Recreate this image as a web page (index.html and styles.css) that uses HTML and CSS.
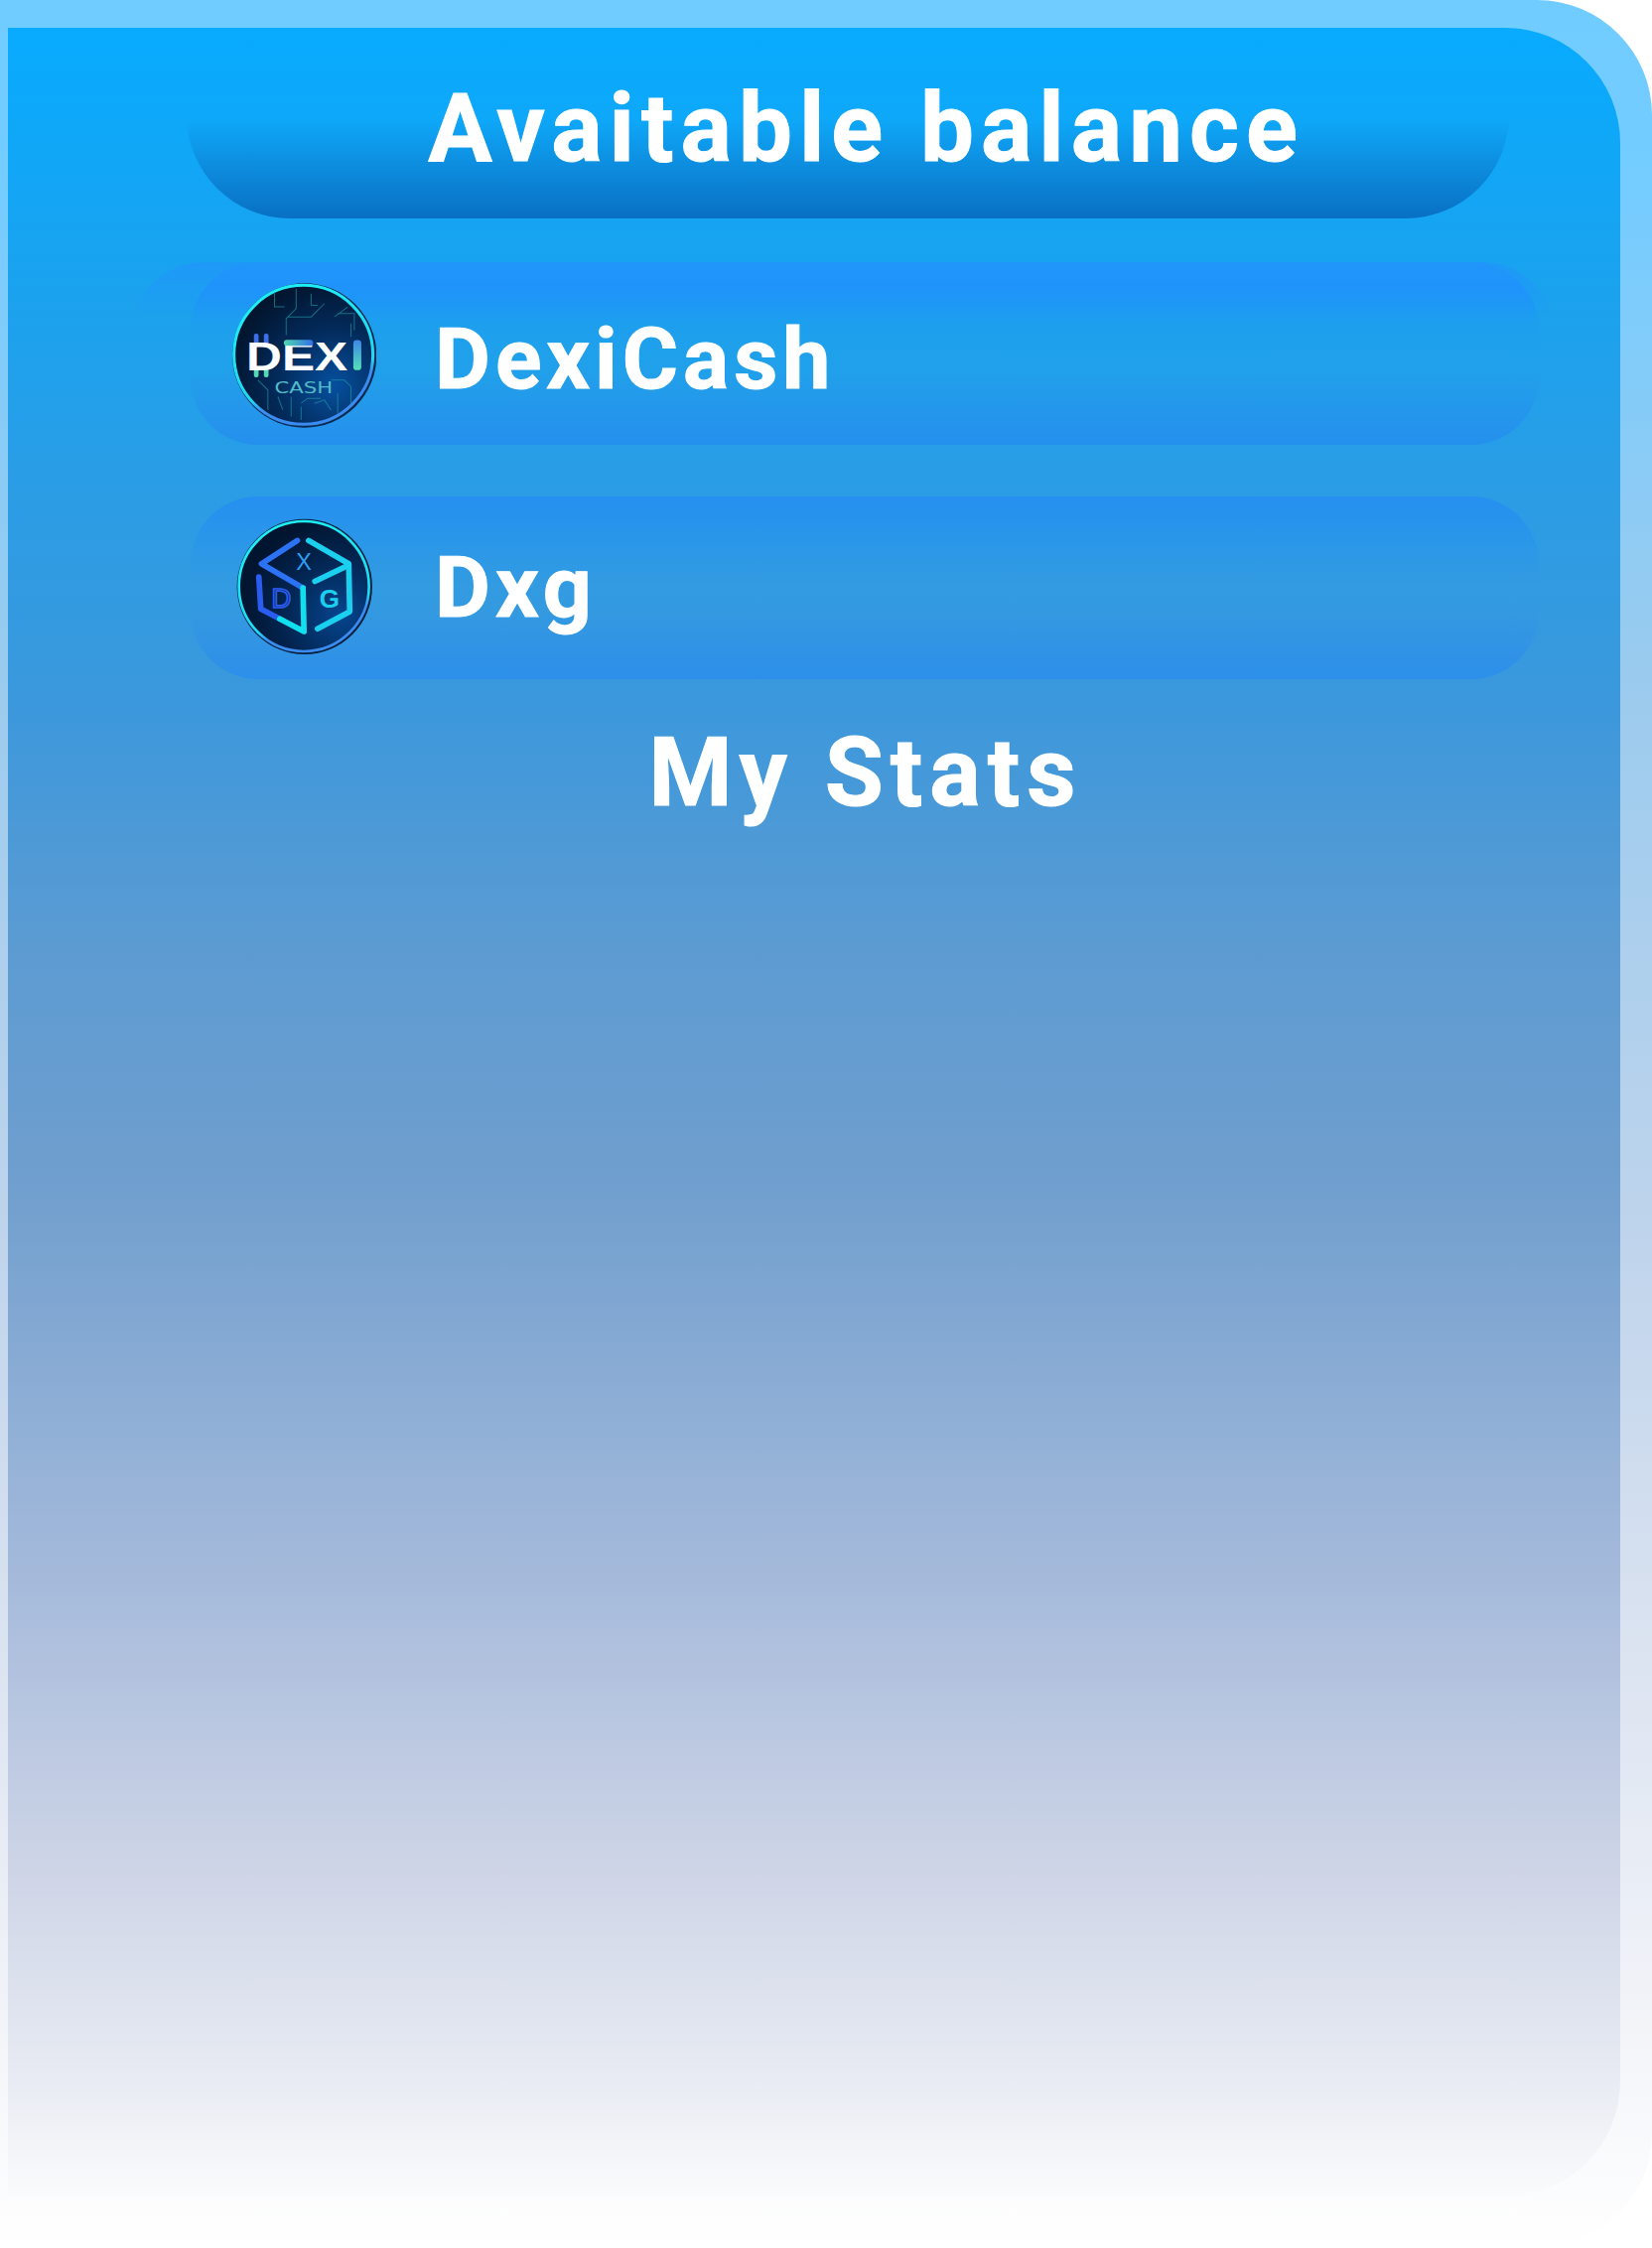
FILE: index.html
```html
<!DOCTYPE html>
<html lang="en">
<head>
<meta charset="utf-8">
<title>Available balance</title>
<link rel="stylesheet" href="styles.css">
</head>
<body>
<main class="panel">
  <div class="panel-inner">
    <header class="title-pill"><h1 class="title">Avaitable balance</h1></header>
    <section class="tokens">
      <div class="token token-glow">
        <span class="token-icon token-icon-dexi">
          <svg viewBox="340 108 436 436" class="token-svg" aria-hidden="true">
            <defs>
              <radialGradient id="dexiBg" cx="0.72" cy="0.72" r="0.75"><stop offset="0" stop-color="#06509f"/><stop offset="0.55" stop-color="#032a5a"/><stop offset="1" stop-color="#021630"/></radialGradient>
              <linearGradient id="dexiRing" x1="0.2" y1="0" x2="0.55" y2="1"><stop offset="0" stop-color="#1ff0f5"/><stop offset="0.72" stop-color="#20d8f5"/><stop offset="0.8" stop-color="#3a8cf0"/><stop offset="1" stop-color="#3a8cf0"/></linearGradient>
              <linearGradient id="dexiBar" x1="0" y1="0" x2="1" y2="0"><stop offset="0" stop-color="#4fd8b0"/><stop offset="1" stop-color="#2f70e8"/></linearGradient>
              <linearGradient id="dexiI" x1="0" y1="0" x2="0" y2="1"><stop offset="0" stop-color="#3f86e8"/><stop offset="1" stop-color="#55e0b8"/></linearGradient>
            </defs>
            <circle cx="560" cy="326" r="217" fill="#0b2a50"/>
            <circle cx="557" cy="324" r="209" fill="url(#dexiBg)" stroke="url(#dexiRing)" stroke-width="9"/>
            <g fill="none" stroke="#1f9aa8" stroke-width="3" opacity="0.65">
              <path d="M470 135v45h30M535 125v60l-30 30v50M580 140v35h20M620 170l-40 40h-70M660 200h50v50M700 230v40M690 180l-40 30"/>
              <path d="M420 400l30 30v60M640 400h40l20 20v50M660 440v60M590 470l30-10 20 30M520 450v60M550 480v40M480 450l15 40M610 455h-40l-20 15"/>
            </g>
            <rect x="408" y="260" width="14" height="34" rx="6" fill="#3f6fe8"/>
            <rect x="438" y="260" width="14" height="34" rx="6" fill="#3f6fe8"/>
            <rect x="408" y="358" width="14" height="34" rx="6" fill="#55d8b8"/>
            <rect x="438" y="358" width="14" height="34" rx="6" fill="#55d8b8"/>
            <text x="385" y="370" class="dexi-word" textLength="305" lengthAdjust="spacingAndGlyphs">DEX</text>
            <rect x="498" y="279" width="88" height="18" rx="9" fill="url(#dexiBar)"/>
            <rect x="707" y="280" width="24" height="90" rx="10" fill="url(#dexiI)"/>
            <text x="470" y="440" class="dexi-sub" textLength="175" lengthAdjust="spacingAndGlyphs">CASH</text>
          </svg>
        </span>
        <span class="token-name">DexiCash</span>
      </div>
      <div class="token">
        <span class="token-icon">
          <svg viewBox="205 95 408 410" class="token-svg token-svg-dxg" aria-hidden="true">
            <defs>
              <radialGradient id="dxgBg" cx="0.78" cy="0.72" r="0.75"><stop offset="0" stop-color="#05458f"/><stop offset="0.6" stop-color="#03244f"/><stop offset="1" stop-color="#021530"/></radialGradient>
              <linearGradient id="dxgRing" x1="0.2" y1="0" x2="0.55" y2="1"><stop offset="0" stop-color="#1ff0f5"/><stop offset="0.75" stop-color="#20d8f5"/><stop offset="0.82" stop-color="#3a8cf0"/><stop offset="1" stop-color="#3a8cf0"/></linearGradient>
            </defs>
            <circle cx="410" cy="301" r="204" fill="#061f3d"/>
            <circle cx="408" cy="300" r="196" fill="url(#dxgBg)" stroke="url(#dxgRing)" stroke-width="8"/>
            <g fill="none" stroke-width="17" stroke-linecap="round" stroke-linejoin="round">
              <path d="M388 162L280 232L405 305" stroke="#2b72f5"/>
              <path d="M335 398L278 368L272 272" stroke="#2b5cf0"/>
              <path d="M405 305L408 436L335 398" stroke="#12e0ee"/>
              <path d="M422 162L543 232L546 376L449 428" stroke="#1bd0ee"/>
              <path d="M441 285L543 236" stroke="#1bd0ee"/>
            </g>
            <text x="408" y="250" class="dxg-letter dxg-x">X</text>
            <text x="340" y="365" class="dxg-letter dxg-d">D</text>
            <text x="485" y="365" class="dxg-letter dxg-g">G</text>
          </svg>
        </span>
        <span class="token-name">Dxg</span>
      </div>
    </section>
    <h2 class="stats">My Stats</h2>
  </div>
</main>
</body>
</html>
```
FILE: styles.css
```css
* { box-sizing: border-box; }
html, body { margin: 0; background: #fff; }
.panel {
  width: 1664px;
  height: 2264px;
  padding: 28px 32px 52px 8px;
  border-radius: 0 116px 116px 0;
  background: linear-gradient(180deg, #70ccff 0%, #74ccff 8%, #9ccbee 31%, #bfd4ec 55%, #d9e2f0 72%, #f1f3f8 89%, #ffffff 100%);
  font-family: Roboto, "Liberation Sans", sans-serif;
  color: #fff;
  -webkit-text-stroke: 1px #fff;
}
.panel-inner {
  height: 100%;
  display: flex;
  flex-direction: column;
  border-radius: 0 116px 116px 0;
  background: linear-gradient(180deg, #08abff 0%, #1aa2ee 12%, #3b98dc 31%, #5c9bd2 42.5%, #719fce 53.7%, #a5badb 71.5%, #cdd4e6 84.7%, #e8ebf3 94.6%, #fafbfc 100%);
}
.title-pill {
  height: 192px;
  margin: 0 112px 0 180px;
  padding-left: 37px;
  display: flex;
  justify-content: center;
  border-radius: 0 0 104px 104px;
  background: linear-gradient(180deg, rgba(8, 112, 196, 0) 48%, #0870c4 100%);
}
.title {
  margin: 51px 0 0;
  font-size: 96px;
  line-height: 100px;
  font-weight: 700;
  letter-spacing: 7px;
}
.tokens {
  display: flex;
  flex-direction: column;
  gap: 52px;
  margin: 44px 82px 0 184px;
}
.token {
  position: relative;
  height: 184px;
  padding-left: 41px;
  display: flex;
  align-items: center;
  gap: 59px;
  border-radius: 68px;
  background: linear-gradient(180deg, #268ff0 0%, rgba(38, 143, 240, 0.35) 28%, rgba(38, 143, 240, 0) 48%, rgba(38, 143, 240, 0) 60%, #2c8fea 100%);
}
.token-glow {
  background: linear-gradient(180deg, rgba(30, 144, 252, 0.35) 0%, rgba(30, 144, 252, 0.75) 14%, rgba(30, 144, 250, 0.12) 34%, rgba(36, 144, 240, 0) 50%, rgba(36, 144, 240, 0) 60%, #2490ee 100%);
}
.token-glow::before {
  content: "";
  position: absolute;
  top: 0;
  left: -59px;
  right: -15px;
  height: 100%;
  border-radius: 72px;
  background: linear-gradient(180deg, rgba(36, 144, 255, 0.55) 0%, rgba(36, 144, 255, 0.3) 14%, rgba(36, 144, 255, 0) 29%);
}
.token-icon {
  position: relative;
  flex: none;
  width: 146px;
  height: 146px;
  display: flex;
  align-items: center;
  justify-content: center;
  -webkit-text-stroke: 0;
}
.token-icon-dexi { transform: translateY(2px); }
.token-svg { display: block; width: 146px; height: 146px; }
.token-svg-dxg { width: 137px; height: 137px; transform: translateY(-2px); }
.token-name {
  position: relative;
  font-size: 86px;
  line-height: 100px;
  font-weight: 700;
  letter-spacing: 5px;
}
.token-glow .token-name { margin-top: 12px; }
.stats {
  margin: 44px 0 0 104px;
  text-align: center;
  font-size: 96px;
  line-height: 100px;
  font-weight: 700;
  letter-spacing: 7px;
}
.dexi-word { font-family: "Liberation Sans", sans-serif; font-weight: 700; font-size: 124px; fill: #fff; }
.dexi-sub { font-family: "DejaVu Sans", sans-serif; font-size: 48px; fill: #52bcc8; }
.dxg-letter { font-family: "Liberation Sans", sans-serif; font-weight: 400; text-anchor: middle; }
.dxg-x { font-size: 70px; fill: #2e9ef5; }
.dxg-d { font-size: 82px; fill: none; stroke: #2b5cf0; stroke-width: 5px; }
.dxg-g { font-size: 78px; font-weight: 700; fill: #1bd0ee; }
```
